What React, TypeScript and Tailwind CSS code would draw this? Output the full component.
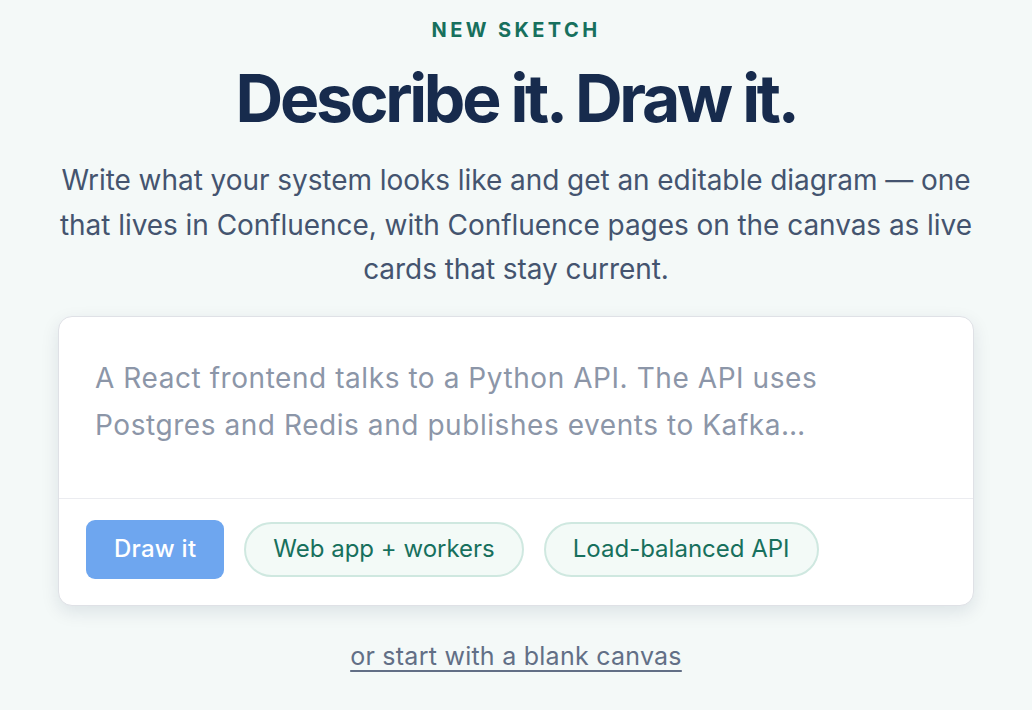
import React, { useState } from "react";

const chips = ["Web app + workers", "Load-balanced API"];

export default function App() {
  const [text, setText] = useState("");

  return (
    <div
      className="min-h-screen bg-[#f4f9f8] flex flex-col items-center pt-[18px]"
      style={{ fontFamily: "Inter, 'Noto Sans', sans-serif" }}
    >
      <div className="text-[20px] leading-[24px] font-bold tracking-[0.17em] text-[#17705d]">NEW SKETCH</div>
      <h1 className="mt-[16px] text-[66px] leading-[80px] font-bold tracking-[-0.05em] text-[#172b4d]">
        Describe it. Draw it.
      </h1>
      <p className="mt-[20px] w-[940px] text-center text-[28px] leading-[44.5px] tracking-[-0.002em] text-[#44546f]">
        Write what your system looks like and get an editable diagram — one that lives in Confluence, with
        Confluence pages on the canvas as live cards that stay current.
      </p>

      <div className="mt-[24px] w-[916px] rounded-[14px] border border-[#dfe1e6] bg-white shadow-[0_6px_18px_rgba(9,30,66,0.10)]">
        <textarea
          value={text}
          onChange={(e) => setText(e.target.value)}
          placeholder="A React frontend talks to a Python API. The API uses Postgres and Redis and publishes events to Kafka…"
          className="block h-[181px] w-full resize-none rounded-t-[14px] bg-transparent pl-[36px] pr-[60px] pt-[38px] text-[28px] leading-[47px] tracking-[0.02em] text-[#172b4d] outline-none placeholder:text-[#8c96a8]"
        />
        <div className="flex items-center gap-[20px] border-t border-[#ebecf0] px-[27px] pt-[21px] pb-[26px]">
          <button className="h-[59px] rounded-[9px] bg-[#6ea6ef] px-[28px] text-[24px] font-medium tracking-[0.01em] text-white">
            Draw it
          </button>
          {chips.map((c) => (
            <button
              key={c}
              onClick={() => setText(c)}
              className="h-[55px] rounded-full border-2 border-[#cfe8e0] bg-[#f3faf7] px-[27px] text-[24px] text-[#17705d]"
            >
              {c}
            </button>
          ))}
        </div>
      </div>

      <a href="#" className="mt-[35px] text-[25px] leading-[30px] tracking-[0.01em] text-[#626f86] underline underline-offset-[5px]">
        or start with a blank canvas
      </a>
    </div>
  );
}
